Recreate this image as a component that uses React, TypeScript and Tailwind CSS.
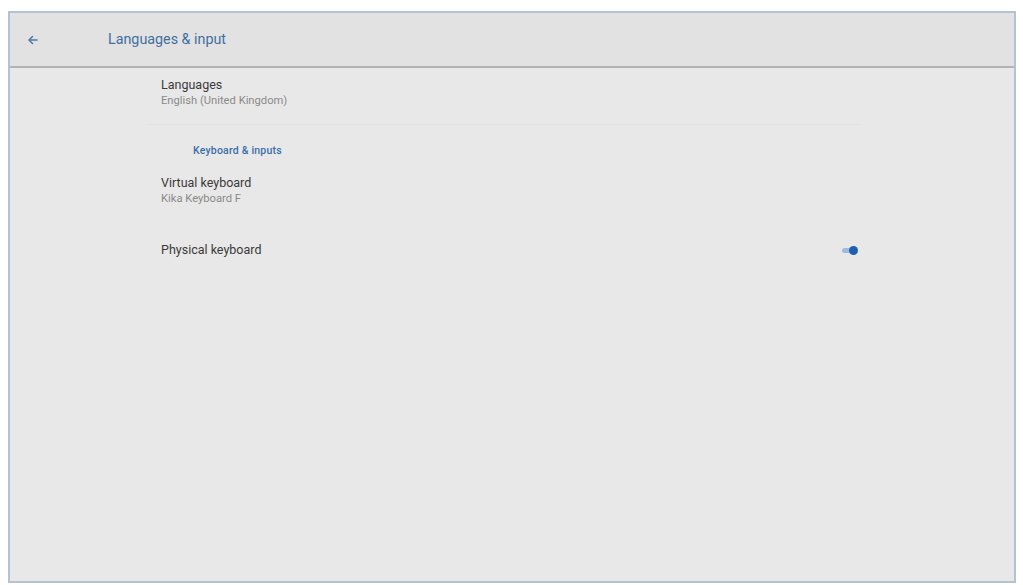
import React from "react";

export default function App() {
  return (
    <div className="w-[1023px] h-[585px] bg-white pt-[11px] pl-[8px]" style={{ fontFamily: "Roboto, 'Liberation Sans', sans-serif" }}>
      <div className="w-[1008px] h-[572px] border-[2px] border-[#b4c3d3] bg-[#e8e8e8] flex flex-col">
        <div className="h-[55px] bg-[#e2e2e2] border-b-[2px] border-[#b3b3b3] flex items-center shrink-0">
          <div className="w-[98px] pl-[17px] flex items-center">
            <svg width="12" height="12" viewBox="0 0 24 24" fill="none" stroke="#4a78a8" strokeWidth="3" strokeLinecap="round" strokeLinejoin="round">
              <path d="M20 12H5" />
              <path d="M11 5l-7 7 7 7" />
            </svg>
          </div>
          <span className="text-[14.3px] text-[#3f6fa0]">Languages &amp; input</span>
        </div>
        <div className="flex-1 pl-[138px]">
          <div className="w-[712px]">
            <div className="h-[57px] pt-[9px] pl-[13px] border-b border-[#e2e2e2]">
              <div className="text-[12.5px] leading-[16px] text-[#3a3a3a]">Languages</div>
              <div className="text-[11.2px] leading-[15px] text-[#8a8a8a]">English (United Kingdom)</div>
            </div>
            <div className="pl-[45px] pt-[19px] text-[10.5px] leading-[14px] font-medium tracking-[0.2px] text-[#3c6fa8]">Keyboard &amp; inputs</div>
            <div className="pl-[13px] pt-[17px]">
              <div className="text-[12.5px] leading-[16px] text-[#3a3a3a]">Virtual keyboard</div>
              <div className="text-[11.2px] leading-[15px] text-[#8a8a8a]">Kika Keyboard F</div>
            </div>
            <div className="pl-[13px] pt-[36px] flex items-center justify-between pr-[2px]">
              <div className="text-[12.5px] leading-[16px] text-[#3a3a3a]">Physical keyboard</div>
              <div className="relative w-[16px] h-[10px] flex items-center">
                <div className="w-[14px] h-[5px] rounded-full bg-[#9dbbe0]" />
                <div className="absolute right-0 top-[0.5px] w-[9px] h-[9px] rounded-full bg-[#1f5fb0]" />
              </div>
            </div>
          </div>
        </div>
      </div>
    </div>
  );
}
